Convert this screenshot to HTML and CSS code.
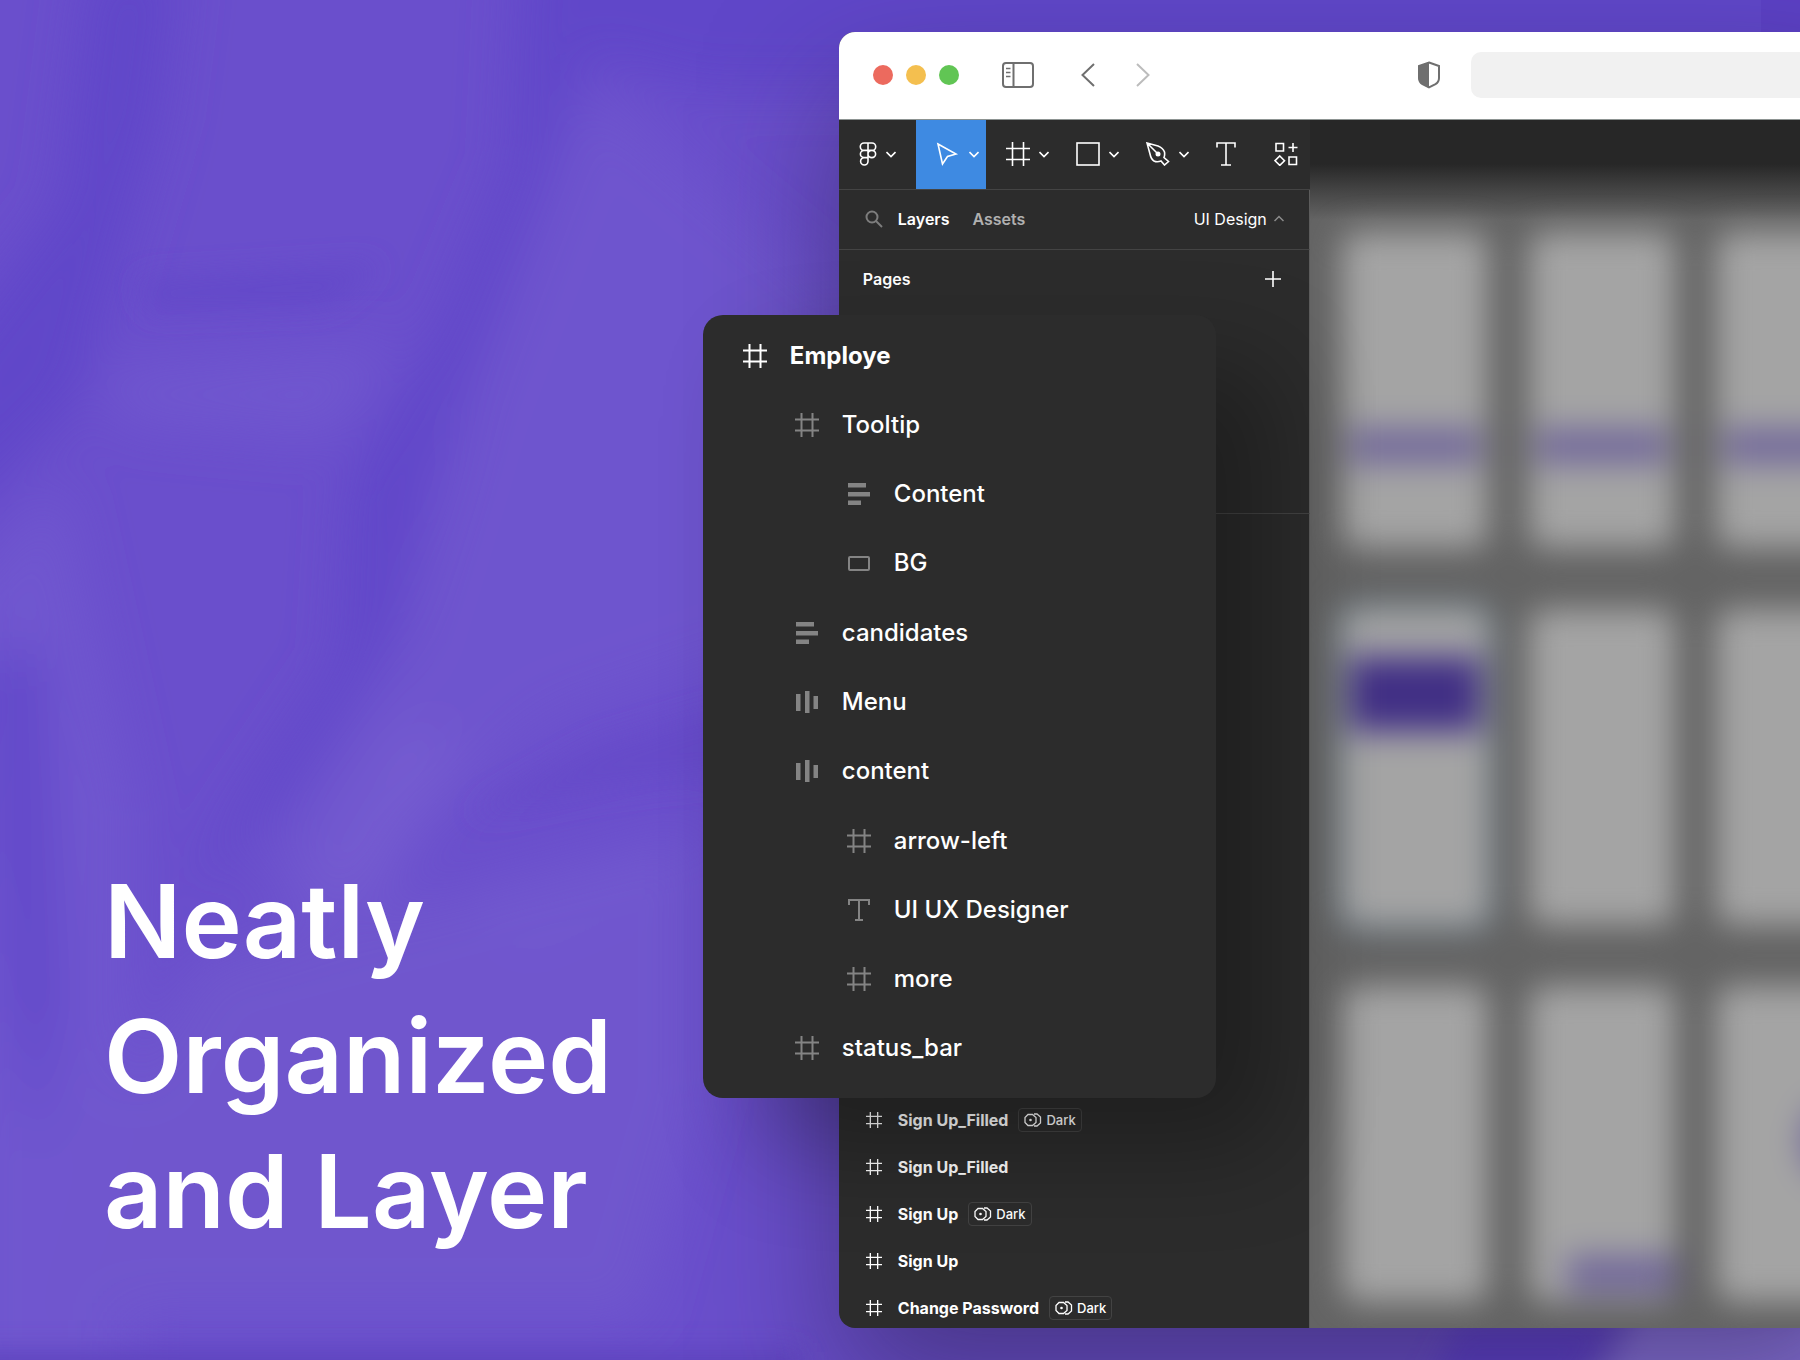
FILE: index.html
```html
<!DOCTYPE html>
<html lang="en">
<head>
    <meta charset="UTF-8">
    <meta name="viewport" content="width=device-width, initial-scale=1.0">
    <title>Neatly Organized and Layer</title>
    <link rel="stylesheet" href="styles.css">
</head>
<body>
    <!-- icon sprites -->
    <svg class="sprites" aria-hidden="true">
        <symbol id="frame" viewBox="0 0 24 24"><path d="M6.500 0V24M17.500 0V24M0 6.500H24M0 17.500H24"/></symbol>
        <symbol id="chevron" viewBox="0 0 10 10"><path d="M0.500 3L5 7.500L9.500 3"/></symbol>
        <symbol id="text" viewBox="0 0 24 24"><path d="M2 7V2H22V7M12 2V22M8 22H16"/></symbol>
        <symbol id="rows" viewBox="0 0 24 24"><path class="solid" d="M1 1H19V5.500H1ZM1 10H23V14.500H1ZM1 18.500H14V23H1Z"/></symbol>
        <symbol id="cols" viewBox="0 0 24 24"><path class="solid" d="M1 4H5.500V21H1ZM10 1H14.500V23H10ZM18.500 6H23V19H18.500Z"/></symbol>
        <symbol id="rect" viewBox="0 0 24 24"><rect x="2" y="6" width="20" height="13" rx="1"/></symbol>
        <symbol id="mode" viewBox="0 0 18 14"><path d="M4 1.500H8.500L12 4.500V9.500L8.500 12.500H4L1 9.500V4.500Z"/><path d="M10 1H13L16.500 4V10L13 13H10"/><circle class="solid" cx="6.500" cy="7" r="1.300"/></symbol>
    </svg>

    <main class="stage">
        <svg class="waves" viewBox="0 0 1800 1360" preserveAspectRatio="none" aria-hidden="true">
            <defs>
                <filter id="soft" x="-20%" y="-20%" width="140%" height="140%"><feGaussianBlur stdDeviation="26"/></filter>
                <filter id="fine" x="-20%" y="-20%" width="140%" height="140%"><feGaussianBlur stdDeviation="14"/></filter>
            </defs>
            <g filter="url(#soft)">
                <path fill="#6e54ce" d="M590 80L850 300V620L560 720L330 900L250 860L400 640L470 400Z"/>
                <path fill="#7057cf" d="M-40 590L60 480L130 800V1400H-40Z"/>
                <path fill="#7056cd" d="M200 960L700 830V1100L640 1320H60L120 1100Z"/>
                <path fill="#755cd0" d="M400 720L470 740L380 900L280 920Z"/>
                <path fill="#7159cf" d="M460 900L660 850V900L520 960Z"/>
                <path fill="#6f56cf" d="M100 370L400 345L330 440L120 420Z"/>
                <path fill="#6146c9" d="M90 -40H180L160 120L80 400L-60 540V360L60 200Z"/>
                <path fill="#6146c9" d="M520 -60H1900V90H700L590 60L500 300L430 480L390 650L290 800L180 900L340 660L350 480L440 330L510 160Z"/>
                <path fill="#6146c9" d="M-20 660L40 650L58 1000L40 1160L10 1000Z"/>
            </g>
            <g filter="url(#fine)">
                <path fill="#6349c9" d="M140 280L380 265L330 305L150 310Z"/>
                <path fill="#664bc9" d="M470 815L600 745L760 700V770L600 790Z"/>
                <path fill="#5d43be" d="M-40 1352H800V1400H-40Z"/>
                <path fill="#5f3fd0" d="M1460 1320H1620L1560 1400H1420Z"/>
                <path fill="#8c76e0" d="M1640 1310H1840V1400H1590Z"/>
            </g>
            <rect x="1761" y="0" width="39" height="40" fill="#5c41c5"/>
        </svg>

        <h1 class="headline">Neatly<br>Organized<br>and Layer</h1>

        <div class="preview">
            <div class="window">
                <header class="browser-bar">
                    <div class="dots">
                        <span class="dot red"></span>
                        <span class="dot yellow"></span>
                        <span class="dot green"></span>
                    </div>
                    <button class="bar-btn" aria-label="Sidebar">
                        <svg width="34" height="28" viewBox="0 0 34 28"><rect x="2" y="2" width="30" height="24" rx="3"/><path d="M12.500 2V26"/><path class="thin" d="M5 7.500H9.500M5 11.500H9.500M5 15.500H9.500"/></svg>
                    </button>
                    <div class="history">
                        <button class="bar-btn" aria-label="Back"><svg width="16" height="26" viewBox="0 0 16 26"><path d="M14 2L2.500 13L14 24"/></svg></button>
                        <button class="bar-btn faded" aria-label="Forward"><svg width="16" height="26" viewBox="0 0 16 26"><path d="M2 2L13.500 13L2 24"/></svg></button>
                    </div>
                    <div class="address">
                        <svg width="24" height="28" viewBox="0 0 24 28"><path d="M12 1.500L22 5V17Q22 21 18.500 23.200L12 26.500L5.500 23.200Q2 21 2 17V5Z"/><path class="solid" d="M12 1L1.500 5V18Q2 21 5 23L12 27Z"/></svg>
                        <input type="text" class="address-input" aria-label="Address">
                    </div>
                </header>

                <div class="workspace">
                    <aside class="sidebar">
                        <nav class="toolbar">
                            <button class="tool menu" aria-label="Main menu">
                                <svg width="18" height="24" viewBox="0 0 18 24"><path d="M9 1H5A3.700 3.700 0 0 0 5 8.400H9ZM9 1H13A3.700 3.700 0 0 1 13 8.400H9ZM9 8.400H5A3.600 3.600 0 0 0 5 15.600H9ZM9 15.600H5A3.700 3.700 0 1 0 9 19.300ZM9 12A3.800 3.600 0 1 0 16.600 12A3.800 3.600 0 1 0 9 12V19"/></svg>
                                <svg class="chevron"><use href="#chevron"/></svg>
                            </button>
                            <button class="tool active" aria-label="Move">
                                <svg width="24" height="24" viewBox="0 0 24 24"><path d="M2 2L20 12L11.500 14.500L6.500 22Z"/></svg>
                                <svg class="chevron"><use href="#chevron"/></svg>
                            </button>
                            <button class="tool" aria-label="Frame">
                                <svg width="24" height="24"><use href="#frame"/></svg>
                                <svg class="chevron"><use href="#chevron"/></svg>
                            </button>
                            <button class="tool" aria-label="Rectangle">
                                <svg width="24" height="24" viewBox="0 0 24 24"><rect x="1" y="1" width="22" height="22"/></svg>
                                <svg class="chevron"><use href="#chevron"/></svg>
                            </button>
                            <button class="tool" aria-label="Pen">
                                <svg width="24" height="24" viewBox="0 0 24 24"><path d="M1 1L12 4Q17 6 18.500 10Q19 13 18 15.500L22.500 19.500L18.500 23L15 19Q11 20.500 8 19Q5 17 4 12ZM1 1L11 11"/><circle class="solid" cx="12" cy="12" r="2.500"/></svg>
                                <svg class="chevron"><use href="#chevron"/></svg>
                            </button>
                            <button class="tool single" aria-label="Text">
                                <svg width="24" height="24" viewBox="0 0 24 24"><path d="M3 5.500V1H21V5.500M12 1V23M7 23H17"/></svg>
                            </button>
                            <button class="tool single last" aria-label="Resources">
                                <svg width="24" height="24" viewBox="0 0 24 24"><path d="M2 1.500H9.500V9H2ZM19 1V10M14.500 5.500H23.500M15 15H22.500V22.500H15ZM5.800 14L10.500 18.700L5.800 23.400L1 18.700Z"/></svg>
                            </button>
                        </nav>

                        <div class="tabs">
                            <svg class="search" width="18" height="18" viewBox="0 0 18 18"><circle cx="7" cy="7" r="5.500"/><path d="M11 11L17 17"/></svg>
                            <button class="tab selected">Layers</button>
                            <button class="tab">Assets</button>
                            <button class="page-switch">UI Design <svg class="chevron up"><use href="#chevron"/></svg></button>
                        </div>

                        <div class="pages">
                            <h2>Pages</h2>
                            <button class="add" aria-label="Add page"><svg width="18" height="18" viewBox="0 0 18 18"><path d="M9 1V17M1 9H17"/></svg></button>
                        </div>

                        <ul class="frames">
                            <li><svg class="icon"><use href="#frame"/></svg>Sign Up_Filled<span class="badge"><svg><use href="#mode"/></svg>Dark</span></li>
                            <li><svg class="icon"><use href="#frame"/></svg>Sign Up_Filled</li>
                            <li><svg class="icon"><use href="#frame"/></svg>Sign Up<span class="badge"><svg><use href="#mode"/></svg>Dark</span></li>
                            <li><svg class="icon"><use href="#frame"/></svg>Sign Up</li>
                            <li><svg class="icon"><use href="#frame"/></svg>Change Password<span class="badge"><svg><use href="#mode"/></svg>Dark</span></li>
                        </ul>
                    </aside>

                    <section class="canvas" aria-label="Canvas">
                        <div class="artboards">
                            <div class="artboard list"><i></i></div>
                            <div class="artboard list"><i></i></div>
                            <div class="artboard list"><i></i></div>
                            <div class="artboard card"><i></i></div>
                            <div class="artboard"></div>
                            <div class="artboard"></div>
                            <div class="artboard"></div>
                            <div class="artboard action"><i></i></div>
                            <div class="artboard round"><i></i></div>
                        </div>
                    </section>
                </div>
            </div>

            <ul class="layers">
                <li class="root"><svg><use href="#frame"/></svg>Employe</li>
                <li class="child"><svg><use href="#frame"/></svg>Tooltip</li>
                <li class="grandchild"><svg><use href="#rows"/></svg>Content</li>
                <li class="grandchild"><svg><use href="#rect"/></svg>BG</li>
                <li class="child"><svg><use href="#rows"/></svg>candidates</li>
                <li class="child"><svg><use href="#cols"/></svg>Menu</li>
                <li class="child"><svg><use href="#cols"/></svg>content</li>
                <li class="grandchild"><svg><use href="#frame"/></svg>arrow-left</li>
                <li class="grandchild"><svg><use href="#text"/></svg>UI UX Designer</li>
                <li class="grandchild"><svg><use href="#frame"/></svg>more</li>
                <li class="child"><svg><use href="#frame"/></svg>status_bar</li>
            </ul>
        </div>
    </main>
</body>
</html>
```
FILE: styles.css
```css
* {
    box-sizing: border-box;
}
body {
    margin: 0;
    font-family: Inter, sans-serif;
    color: #fff;
    background: #6a4fcc;
}
h1, h2, ul {
    margin: 0;
    padding: 0;
}
ul {
    list-style: none;
}
button {
    padding: 0;
    border: 0;
    background: none;
    color: inherit;
    font: inherit;
    cursor: pointer;
}
svg {
    display: block;
    flex: none;
    fill: none;
    stroke: currentColor;
    stroke-width: 2;
}
.solid {
    fill: currentColor;
    stroke: none;
}
.sprites {
    position: absolute;
    width: 0;
    height: 0;
}

.stage {
    position: relative;
    display: grid;
    grid-template-columns: 46.6% 1fr;
    min-height: 100vh;
    overflow: hidden;
}
.waves {
    position: absolute;
    inset: 0;
    width: 100%;
    height: 100%;
    stroke: none;
}
.headline {
    position: relative;
    align-self: end;
    padding: 0 0 101px 104px;
    font-size: 102px;
    line-height: 135px;
    font-weight: 600;
}

/* browser window */
.preview {
    position: relative;
    display: flex;
    padding: 32px 0;
}
.window {
    flex: 1;
    display: flex;
    flex-direction: column;
    overflow: hidden;
    border-radius: 16px 0 0 16px;
    background: #2c2c2c;
    box-shadow: 0 60px 130px rgba(40, 30, 70, 0.5);
}
.browser-bar {
    display: flex;
    align-items: center;
    height: 88px;
    padding: 0 0 2px 34px;
    background: #fff;
    border-bottom: 1px solid #8d9492;
    color: #6f6f6f;
}
.browser-bar svg {
    stroke-width: 2;
}
.browser-bar .thin {
    stroke-width: 1.5;
}
.dots {
    display: flex;
    gap: 13px;
    margin-right: 42px;
}
.dot {
    width: 20px;
    height: 20px;
    border-radius: 50%;
}
.red { background: #ec6a5e; }
.yellow { background: #f4bf4f; }
.green { background: #61c554; }
.history {
    display: flex;
    gap: 39px;
    margin-left: 45px;
}
.faded {
    color: #bcbcbc;
}
.address {
    display: flex;
    align-items: center;
    gap: 30px;
    width: 45%;
    margin-left: auto;
}
.address-input {
    flex: 1;
    min-width: 0;
    height: 46px;
    border: 0;
    border-radius: 10px 0 0 10px;
    background: #f1f1f1;
}

.workspace {
    flex: 1;
    display: flex;
}
.sidebar {
    width: 471px;
    display: flex;
    flex-direction: column;
    font-size: 16px;
    line-height: 20px;
}
.toolbar {
    display: flex;
    height: 70px;
    border-bottom: 1px solid #444;
}
.toolbar svg,
.add svg {
    stroke-width: 1.6;
}
.tool {
    display: flex;
    align-items: center;
    gap: 9px;
    width: 70px;
    padding: 0 0 2px 20px;
}
.tool.menu {
    width: 77px;
}
.tool.active {
    background: #3e8ae2;
}
.tool.single {
    width: 60px;
    padding-left: 18px;
}
.tool.last {
    flex: 1;
}
.chevron {
    width: 10px;
    height: 10px;
}
.chevron.up {
    transform: rotate(180deg);
    color: #8c8c8c;
    stroke-width: 1.5;
}
.tabs {
    display: flex;
    align-items: center;
    height: 60px;
    padding: 0 25px 2px 26px;
    border-right: 1px solid #5c5c5c;
    border-bottom: 1px solid #444;
}
.search {
    margin-right: 15px;
    color: #7d7d7d;
}
.tab {
    margin-right: 23px;
    font-weight: 600;
    color: #b0b0b0;
}
.tab.selected {
    color: #fff;
}
.page-switch {
    display: flex;
    align-items: center;
    gap: 7px;
    margin-left: auto;
}
.pages {
    display: flex;
    justify-content: space-between;
    align-items: start;
    height: 264px;
    padding: 19px 27px 0 24px;
    border-right: 1px solid #5c5c5c;
    border-bottom: 1px solid #444;
}
.pages h2 {
    font-size: 16px;
    font-weight: 600;
}
.add {
    padding-top: 1px;
}
.frames {
    flex: 1;
    display: flex;
    flex-direction: column;
    justify-content: flex-end;
    margin-bottom: -3px;
    padding: 0 27px;
    border-right: 1px solid #5c5c5c;
    font-weight: 700;
}
.frames li {
    display: flex;
    align-items: center;
    height: 47px;
}
.icon {
    width: 16px;
    height: 16px;
    margin-right: 16px;
}
.badge {
    display: flex;
    align-items: center;
    gap: 4px;
    height: 24px;
    margin-left: 10px;
    padding: 0 5px;
    border: 1px solid #434343;
    border-radius: 4px;
    font-size: 13px;
    font-weight: 500;
}
.badge svg {
    width: 18px;
    height: 14px;
    stroke-width: 1.3;
}

/* out-of-focus artboards */
.canvas {
    flex: 1;
    min-width: 0;
    overflow: hidden;
    background: linear-gradient(#272727 44px, #444 70px, #646464 100px);
}
.artboards {
    display: grid;
    grid-template-columns: repeat(3, 146px);
    grid-auto-rows: 316px;
    gap: 61px 41px;
    padding: 112px 0 0 32px;
    filter: blur(16px);
}
.artboard {
    display: flex;
    flex-direction: column;
    align-items: center;
    border-radius: 16px;
    background: #a4a4a4;
}
.artboard i {
    width: 130px;
    background: #71679a;
}
.list i {
    height: 34px;
    margin-top: 197px;
}
.card {
    outline: 6px solid #6a7f90;
}
.card i {
    height: 74px;
    margin-top: 48px;
    background: #412f85;
}
.action i {
    align-self: flex-end;
    width: 108px;
    height: 36px;
    margin-top: 270px;
}
.round i {
    align-self: flex-end;
    width: 60px;
    height: 78px;
    margin-top: 116px;
    border-radius: 50%;
}

/* layer tree panel */
.layers {
    position: absolute;
    top: 315px;
    left: -136px;
    display: grid;
    grid-auto-rows: 1fr;
    width: 513px;
    min-height: 783px;
    padding: 6px 0 15px;
    border-radius: 20px;
    background: #2c2c2c;
    box-shadow: 60px 50px 100px rgba(0, 0, 0, 0.3);
    font-size: 24px;
    line-height: 32px;
    font-weight: 500;
}
.layers li {
    display: flex;
    align-items: center;
    gap: 23px;
}
.layers svg {
    width: 24px;
    height: 24px;
    color: #848484;
}
.root {
    padding-left: 40px;
    font-weight: 700;
}
.layers .root svg {
    color: #fff;
}
.child {
    padding-left: 92px;
}
.grandchild {
    padding-left: 144px;
}
```
